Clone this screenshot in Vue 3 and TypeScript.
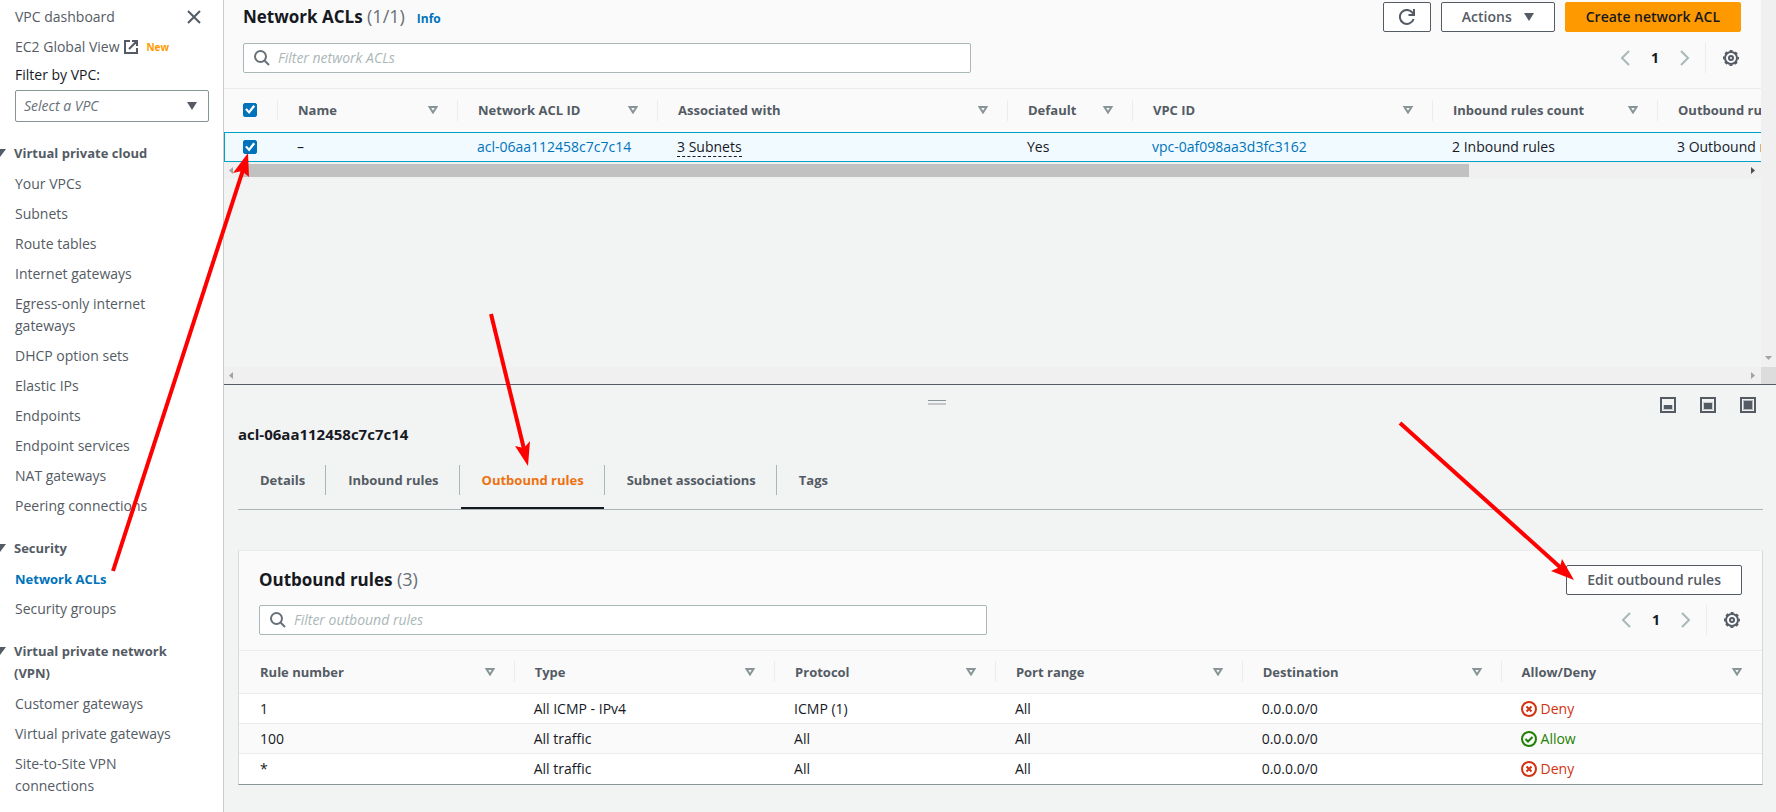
<script setup lang="ts">
import { ref } from 'vue'

interface NavSection {
  title: string
  links: string[]
}

interface Column {
  label: string
  width: string
}

interface Rule {
  number: string
  type: string
  protocol: string
  ports: string
  destination: string
  allow: boolean
}

const sections: NavSection[] = [
  {
    title: 'Virtual private cloud',
    links: [
      'Your VPCs',
      'Subnets',
      'Route tables',
      'Internet gateways',
      'Egress-only internet gateways',
      'DHCP option sets',
      'Elastic IPs',
      'Endpoints',
      'Endpoint services',
      'NAT gateways',
      'Peering connections',
    ],
  },
  { title: 'Security', links: ['Network ACLs', 'Security groups'] },
  {
    title: 'Virtual private network (VPN)',
    links: ['Customer gateways', 'Virtual private gateways', 'Site-to-Site VPN connections'],
  },
]
const activeLink = ref('Network ACLs')

const aclColumns: Column[] = [
  { label: 'Name', width: '180px' },
  { label: 'Network ACL ID', width: '200px' },
  { label: 'Associated with', width: '350px' },
  { label: 'Default', width: '125px' },
  { label: 'VPC ID', width: '300px' },
  { label: 'Inbound rules count', width: '225px' },
  { label: 'Outbound rules count', width: '225px' },
]

const tabs = ['Details', 'Inbound rules', 'Outbound rules', 'Subnet associations', 'Tags']
const activeTab = ref('Outbound rules')

const ruleColumns: Column[] = [
  { label: 'Rule number', width: '18.1%' },
  { label: 'Type', width: '17.1%' },
  { label: 'Protocol', width: '14.5%' },
  { label: 'Port range', width: '16.2%' },
  { label: 'Destination', width: '17%' },
  { label: 'Allow/Deny', width: '17.1%' },
]

const rules: Rule[] = [
  { number: '1', type: 'All ICMP - IPv4', protocol: 'ICMP (1)', ports: 'All', destination: '0.0.0.0/0', allow: false },
  { number: '100', type: 'All traffic', protocol: 'All', ports: 'All', destination: '0.0.0.0/0', allow: true },
  { number: '*', type: 'All traffic', protocol: 'All', ports: 'All', destination: '0.0.0.0/0', allow: false },
]

const allSelected = ref(true)
const rowSelected = ref(true)
const aclFilter = ref('')
const ruleFilter = ref('')
const vpc = ref('')
</script>

<template>
  <div class="page">
    <nav class="sidebar" aria-label="VPC">
      <div class="side-row">
        <a href="#" class="side-link">VPC dashboard</a>
        <button class="icon-btn close" aria-label="Close navigation">
          <svg width="14" height="14" viewBox="0 0 14 14"><path d="M1 1l12 12M13 1L1 13" fill="none" stroke="#545b64" stroke-width="2" /></svg>
        </button>
      </div>
      <div class="side-row ec2">
        <a href="#" class="side-link">EC2 Global View</a>
        <svg width="14" height="14" viewBox="0 0 14 14" fill="none" stroke="#545b64" stroke-width="2">
          <path d="M6 1H1v12h12V8M8 1h5v5M13 1L5 9" />
        </svg>
        <span class="new">New</span>
      </div>
      <label class="filter-label" for="vpc-select">Filter by VPC:</label>
      <div class="select-wrap">
        <select id="vpc-select" v-model="vpc">
          <option value="">Select a VPC</option>
        </select>
        <svg width="10" height="8" viewBox="0 0 10 8"><path d="M0 0h10L5 8z" fill="#545b64" /></svg>
      </div>

      <section v-for="s in sections" :key="s.title" class="nav-section">
        <button class="nav-head">
          <svg width="12" height="8" viewBox="0 0 12 8"><path d="M0 0h12L6 8z" fill="#545b64" /></svg>
          <span>{{ s.title }}</span>
        </button>
        <ul>
          <li v-for="l in s.links" :key="l">
            <a href="#" class="side-link" :class="{ active: l === activeLink }" @click.prevent="activeLink = l">{{ l }}</a>
          </li>
        </ul>
      </section>
    </nav>

    <main class="main">
      <section class="top-pane">
        <div class="top-content">
          <header class="table-header">
            <div class="title-row">
              <h1>Network ACLs <span class="count">(1/1)</span></h1>
              <a href="#" class="info">Info</a>
              <div class="actions">
                <button class="btn refresh" aria-label="Refresh">
                  <svg width="16" height="16" viewBox="0 0 16 16" fill="none" stroke="#545b64" stroke-width="2">
                    <path d="M14.6 10A7 7 0 1 1 13.4 3.6L15 5.4" />
                    <path d="M15 0v6H9.500" />
                  </svg>
                </button>
                <button class="btn">
                  Actions
                  <svg width="10" height="8" viewBox="0 0 10 8"><path d="M0 0h10L5 8z" fill="#545b64" /></svg>
                </button>
                <button class="btn primary">Create network ACL</button>
              </div>
            </div>
            <div class="filter-row">
              <label class="search">
                <svg width="16" height="16" viewBox="0 0 16 16" fill="none" stroke="#687078" stroke-width="2">
                  <circle cx="6.500" cy="6.500" r="5.500" /><path d="M10.500 10.500L15 15" />
                </svg>
                <input v-model="aclFilter" type="text" aria-label="Filter network ACLs" placeholder="Filter network ACLs" />
              </label>
              <div class="pager">
                <button class="icon-btn" aria-label="Previous page">
                  <svg width="10" height="16" viewBox="0 0 10 16"><path d="M9 1L2 8l7 7" fill="none" stroke="#aab7b8" stroke-width="2" /></svg>
                </button>
                <button class="icon-btn page-no">1</button>
                <button class="icon-btn" aria-label="Next page">
                  <svg width="10" height="16" viewBox="0 0 10 16"><path d="M1 1l7 7-7 7" fill="none" stroke="#aab7b8" stroke-width="2" /></svg>
                </button>
                <span class="divider"></span>
                <button class="icon-btn gear" aria-label="Preferences">
                  <svg width="16" height="16" viewBox="0 0 16 16" fill="none" stroke="#545b64">
                    <circle cx="8" cy="8" r="6" stroke-width="2" />
                    <circle cx="8" cy="8" r="7.300" stroke-width="1.400" stroke-dasharray="3 2.730" stroke-dashoffset="1.500" />
                    <circle cx="8" cy="8" r="2" stroke-width="2" />
                  </svg>
                </button>
              </div>
            </div>
          </header>

          <div class="table-clip">
            <table class="acl-table">
              <colgroup>
                <col class="col-check" />
                <col v-for="c in aclColumns" :key="c.label" :style="{ width: c.width }" />
              </colgroup>
              <thead>
                <tr>
                  <th class="check"><input v-model="allSelected" type="checkbox" aria-label="Select all" /></th>
                  <th v-for="c in aclColumns" :key="c.label">
                    <div class="th">
                      <span>{{ c.label }}</span>
                      <svg width="10" height="8" viewBox="0 0 10 8"><path d="M1.500 1h7L5 6.500z" fill="none" stroke="#879596" stroke-width="2" /></svg>
                    </div>
                  </th>
                </tr>
              </thead>
              <tbody>
                <tr class="selected">
                  <td class="check"><input v-model="rowSelected" type="checkbox" aria-label="Select acl-06aa112458c7c7c14" /></td>
                  <td>–</td>
                  <td><a href="#">acl-06aa112458c7c7c14</a></td>
                  <td><span class="dashed">3 Subnets</span></td>
                  <td>Yes</td>
                  <td><a href="#">vpc-0af098aa3d3fc3162</a></td>
                  <td>2 Inbound rules</td>
                  <td>3 Outbound rules</td>
                </tr>
              </tbody>
            </table>
          </div>
          <div class="hbar">
            <svg width="4" height="7" viewBox="0 0 4 7"><path d="M4 0v7L0 3.500z" fill="#a3a3a3" /></svg>
            <div class="track"><div class="thumb"></div></div>
            <svg width="4" height="7" viewBox="0 0 4 7"><path d="M0 0v7L4 3.500z" fill="#505050" /></svg>
          </div>
        </div>
        <div class="vbar">
          <svg width="7" height="4" viewBox="0 0 7 4"><path d="M0 0h7L3.500 4z" fill="#a3a3a3" /></svg>
        </div>
        <div class="hbar outer">
          <svg width="4" height="7" viewBox="0 0 4 7"><path d="M4 0v7L0 3.500z" fill="#a3a3a3" /></svg>
          <svg width="4" height="7" viewBox="0 0 4 7"><path d="M0 0v7L4 3.500z" fill="#a3a3a3" /></svg>
        </div>
        <div class="corner"></div>
      </section>

      <section class="split">
        <div class="split-bar">
          <span></span>
          <svg class="grip" width="18" height="5" viewBox="0 0 18 5">
            <path d="M0 .500h18" stroke="#879596" /><path d="M0 4h18" stroke="#c3c7c7" stroke-width="2" />
          </svg>
          <div class="sizes">
            <button class="icon-btn" aria-label="Small panel">
              <svg width="16" height="16" viewBox="0 0 16 16"><rect x="1" y="1" width="14" height="14" fill="none" stroke="#545b64" stroke-width="2" /><path d="M3 8h10v5H3z" fill="#545b64" opacity=".25" /><path d="M4 8h8v4H4z" fill="#545b64" /></svg>
            </button>
            <button class="icon-btn" aria-label="Medium panel">
              <svg width="16" height="16" viewBox="0 0 16 16"><rect x="1" y="1" width="14" height="14" fill="none" stroke="#545b64" stroke-width="2" /><path d="M3 5h10v8H3z" fill="#545b64" opacity=".25" /><path d="M4 6h8v6H4z" fill="#545b64" /></svg>
            </button>
            <button class="icon-btn" aria-label="Full panel">
              <svg width="16" height="16" viewBox="0 0 16 16"><rect x="1" y="1" width="14" height="14" fill="none" stroke="#545b64" stroke-width="2" /><path d="M3 3h10v10H3z" fill="#545b64" opacity=".4" /><path d="M4 4h8v8H4z" fill="#545b64" /></svg>
            </button>
          </div>
        </div>
        <h2 class="acl-id">acl-06aa112458c7c7c14</h2>
        <div class="tabs" role="tablist">
          <div v-for="t in tabs" :key="t" class="tab-item">
            <button role="tab" :aria-selected="t === activeTab" :class="{ active: t === activeTab }" @click="activeTab = t">{{ t }}</button>
          </div>
        </div>

        <div class="card">
          <header class="table-header">
            <div class="title-row">
              <h1>Outbound rules <span class="count">(3)</span></h1>
              <div class="actions"><button class="btn">Edit outbound rules</button></div>
            </div>
            <div class="filter-row">
              <label class="search">
                <svg width="16" height="16" viewBox="0 0 16 16" fill="none" stroke="#687078" stroke-width="2">
                  <circle cx="6.500" cy="6.500" r="5.500" /><path d="M10.500 10.500L15 15" />
                </svg>
                <input v-model="ruleFilter" type="text" aria-label="Filter outbound rules" placeholder="Filter outbound rules" />
              </label>
              <div class="pager">
                <button class="icon-btn" aria-label="Previous page">
                  <svg width="10" height="16" viewBox="0 0 10 16"><path d="M9 1L2 8l7 7" fill="none" stroke="#aab7b8" stroke-width="2" /></svg>
                </button>
                <button class="icon-btn page-no">1</button>
                <button class="icon-btn" aria-label="Next page">
                  <svg width="10" height="16" viewBox="0 0 10 16"><path d="M1 1l7 7-7 7" fill="none" stroke="#aab7b8" stroke-width="2" /></svg>
                </button>
                <span class="divider"></span>
                <button class="icon-btn gear" aria-label="Preferences">
                  <svg width="16" height="16" viewBox="0 0 16 16" fill="none" stroke="#545b64">
                    <circle cx="8" cy="8" r="6" stroke-width="2" />
                    <circle cx="8" cy="8" r="7.300" stroke-width="1.400" stroke-dasharray="3 2.730" stroke-dashoffset="1.500" />
                    <circle cx="8" cy="8" r="2" stroke-width="2" />
                  </svg>
                </button>
              </div>
            </div>
          </header>
          <table class="rule-table">
            <colgroup>
              <col v-for="c in ruleColumns" :key="c.label" :style="{ width: c.width }" />
            </colgroup>
            <thead>
              <tr>
                <th v-for="c in ruleColumns" :key="c.label">
                  <div class="th">
                    <span>{{ c.label }}</span>
                    <svg width="10" height="8" viewBox="0 0 10 8"><path d="M1.500 1h7L5 6.500z" fill="none" stroke="#879596" stroke-width="2" /></svg>
                  </div>
                </th>
              </tr>
            </thead>
            <tbody>
              <tr v-for="r in rules" :key="r.number">
                <td>{{ r.number }}</td>
                <td>{{ r.type }}</td>
                <td>{{ r.protocol }}</td>
                <td>{{ r.ports }}</td>
                <td>{{ r.destination }}</td>
                <td>
                  <span class="status" :class="r.allow ? 'allow' : 'deny'">
                    <svg width="16" height="16" viewBox="0 0 16 16" fill="none" stroke="currentColor" stroke-width="2">
                      <circle cx="8" cy="8" r="7" />
                      <path v-if="r.allow" d="M4.500 8L7 10.500 11.500 6" />
                      <path v-else d="M5.500 5.500l5 5M10.500 5.500l-5 5" />
                    </svg>
                    {{ r.allow ? 'Allow' : 'Deny' }}
                  </span>
                </td>
              </tr>
            </tbody>
          </table>
        </div>
      </section>
    </main>

    <svg class="arrows" width="1776" height="812" viewBox="0 0 1776 812" aria-hidden="true">
      <g stroke="#f00" stroke-width="4">
        <path d="M113 571L243 170" />
        <path d="M491 314L524 449" />
        <path d="M1400 423L1561 568" />
      </g>
      <g fill="#f00">
        <path d="M248 153L233 173L242 171L249 177z" />
        <path d="M528 466L515 446L524 448L530 441z" />
        <path d="M1574 580L1551 571L1560 567L1562 559z" />
      </g>
    </svg>
  </div>
</template>

<style>
body {
  margin: 0;
}
</style>

<style scoped>
.page {
  position: relative;
  display: flex;
  min-height: 100vh;
  overflow: hidden;
  background: #f2f3f3;
  color: #16191f;
  font-family: "Open Sans", "Noto Sans", sans-serif;
  font-size: 14px;
  line-height: 22px;
}
* {
  box-sizing: border-box;
}
button,
input,
select {
  font: inherit;
  color: inherit;
}
button {
  cursor: pointer;
}
svg {
  display: block;
  flex: none;
}
a {
  color: #0073bb;
  text-decoration: none;
}
.icon-btn {
  display: flex;
  padding: 0;
  border: 0;
  background: none;
}

/* Side navigation */
.sidebar {
  flex: 0 0 224px;
  padding: 6px 14px 14px 15px;
  border-right: 1px solid #ccc;
  background: #fff;
}
.side-row {
  display: flex;
  align-items: center;
  justify-content: space-between;
}
.side-row .close {
  margin-right: 8px;
}
.side-row.ec2 {
  justify-content: flex-start;
  gap: 5px;
  margin: 8px 0 6px;
}
.new {
  margin-left: 3px;
  color: #ff9900;
  font-size: 10px;
  font-weight: 700;
}
.side-link {
  color: #545b64;
}
.side-link.active {
  color: #0073bb;
  font-size: 13px;
  font-weight: 700;
}
.filter-label {
  display: block;
  margin-bottom: 4px;
}
.select-wrap {
  display: grid;
  align-items: center;
}
.select-wrap > * {
  grid-area: 1 / 1;
}
.select-wrap svg {
  justify-self: end;
  margin-right: 12px;
  pointer-events: none;
}
select {
  width: 100%;
  height: 32px;
  padding: 0 8px;
  border: 1px solid #879596;
  border-radius: 2px;
  background: #fff;
  color: #687078;
  font-style: italic;
  appearance: none;
}
.nav-section {
  margin-top: 20px;
}
.nav-head {
  display: flex;
  align-items: flex-start;
  gap: 8px;
  margin: 0 0 9px -21px;
  padding: 0;
  border: 0;
  background: none;
  color: #545b64;
  font-size: 13px;
  font-weight: 700;
  text-align: left;
}
.nav-head svg {
  margin-top: 7px;
}
.nav-head span {
  max-width: 180px;
}
ul {
  display: flex;
  flex-direction: column;
  gap: 8px;
  margin: 0;
  padding: 0 20px 0 0;
  list-style: none;
}

/* Upper pane */
.main {
  display: flex;
  flex: 1;
  flex-direction: column;
  min-width: 0;
}
.top-pane {
  display: grid;
  flex: 0 0 384px;
  grid-template: minmax(0, 1fr) 17px / minmax(0, 1fr) 15px;
}
.top-content {
  min-width: 0;
}
.table-header {
  padding: 0 20px 15px 19px;
  border-bottom: 1px solid #eaeded;
  background: #fafafa;
}
.top-content .table-header {
  padding-top: 2px;
}
.title-row {
  display: flex;
  align-items: center;
}
h1 {
  margin: 0;
  padding-bottom: 2px;
  font-size: 17px;
  font-weight: 700;
  line-height: 22px;
}
.count {
  color: #687078;
  font-size: 18px;
  font-weight: 400;
}
.info {
  margin: 3px 0 0 12px;
  font-size: 12px;
  font-weight: 700;
}
.actions {
  display: flex;
  gap: 10px;
  margin-left: auto;
}
.btn {
  display: flex;
  align-items: center;
  justify-content: center;
  gap: 12px;
  height: 30px;
  padding: 0 20px;
  border: 1px solid #545b64;
  border-radius: 2px;
  background: #fff;
  color: #545b64;
  font-weight: 600;
}
.btn.refresh {
  width: 48px;
  padding: 0;
}
.btn.primary {
  border-color: #ff9900;
  background: #ff9900;
  color: #16191f;
}
.filter-row {
  display: flex;
  align-items: center;
  justify-content: space-between;
  margin-top: 11px;
}
.search {
  display: flex;
  flex: 0 1 728px;
  align-items: center;
  gap: 8px;
  height: 30px;
  padding: 0 10px;
  border: 1px solid #aab7b8;
  border-radius: 2px;
  background: #fff;
}
.search input {
  flex: 1;
  min-width: 0;
  padding: 0;
  border: 0;
  outline: 0;
  background: none;
}
.search input::placeholder {
  color: #aab7b8;
  font-style: italic;
}
.pager {
  display: flex;
  align-items: center;
}
.page-no {
  justify-content: center;
  width: 50px;
  font-weight: 700;
}
.divider {
  width: 1px;
  height: 30px;
  margin-left: 15px;
  background: #eaeded;
}
.gear {
  margin: 0 2px 0 17px;
}

/* Tables */
.table-clip {
  overflow: hidden;
}
table {
  border-collapse: separate;
  border-spacing: 0;
  table-layout: fixed;
}
.acl-table {
  width: 1659px;
  min-width: 100%;
}
.col-check {
  width: 54px;
}
th {
  height: 43px;
  padding: 0 0 1px;
  background: #fafafa;
  color: #545b64;
  font-size: 13px;
  font-weight: 700;
  text-align: left;
}
.th {
  display: flex;
  align-items: center;
  justify-content: space-between;
  height: 21px;
  padding: 0 19px 0 20px;
  border-right: 1px solid #eaeded;
  white-space: nowrap;
}
th.check::after {
  display: block;
  width: 1px;
  height: 21px;
  margin-left: auto;
  background: #eaeded;
  content: "";
}
th.check {
  padding-left: 19px;
}
th.check input {
  float: left;
}
th:last-child .th {
  border-right-color: transparent;
}
td {
  height: 30px;
  padding: 0 19px;
  background: #fff;
  white-space: nowrap;
}
td.check {
  padding: 0 0 0 19px;
}
.selected td {
  border: solid #00a1c9;
  border-width: 1px 0;
  background: #f1faff;
}
.selected td:first-child {
  border-left-width: 1px;
  padding-left: 18px;
}
input[type='checkbox'] {
  display: block;
  width: 14px;
  height: 14px;
  margin: 0;
  border: 1px solid #0073bb;
  border-radius: 2px;
  background: #fff;
  appearance: none;
}
th.check input[type='checkbox'] {
  margin-top: 3px;
}
input[type='checkbox']:checked {
  background: #0073bb;
}
input[type='checkbox']:checked::before {
  display: block;
  width: 12px;
  height: 12px;
  background: #fff;
  clip-path: polygon(9% 50%, 24% 39%, 41% 60%, 77% 12%, 93% 24%, 43% 87%);
  content: "";
}
.dashed {
  display: inline-block;
  border-bottom: 1px dashed #16191f;
  line-height: 18px;
}

/* Scroll bars */
.hbar {
  display: flex;
  align-items: center;
  gap: 7px;
  height: 17px;
  padding: 0 6px 0 5px;
  background: #f0f0f0;
}
.outer {
  justify-content: space-between;
}
.track {
  flex: 1;
}
.thumb {
  width: 81.7%;
  height: 13px;
  background: #c1c1c1;
}
.vbar {
  display: flex;
  align-items: flex-end;
  justify-content: center;
  padding-bottom: 7px;
  background: #f0f0f0;
}
.corner {
  background: #dcdcdc;
}

/* Split panel */
.split {
  flex: 1;
  padding: 0 13px 26px 14px;
  border-top: 1px solid #545b64;
}
.split-bar {
  display: grid;
  grid-template-columns: 46fr auto 54fr;
  padding: 12px 7px 0 0;
}
.grip {
  margin: 3px 0 0;
}
.sizes {
  display: flex;
  justify-content: flex-end;
  gap: 24px;
}
.acl-id {
  margin: 10px 0 0;
  font-size: 15px;
  font-weight: 700;
  line-height: 22px;
}
.tabs {
  display: flex;
  margin-top: 20px;
  border-bottom: 1px solid #aab7b8;
}
.tab-item {
  display: flex;
  align-items: flex-start;
}
.tab-item:not(:last-child)::after {
  width: 1px;
  height: 30px;
  background: #aab7b8;
  content: "";
}
.tabs button {
  height: 44px;
  margin: 0 0 0 1px;
  padding: 0 20px 12px 21px;
  border: 0;
  border-bottom: 2px solid transparent;
  background: none;
  color: #545b64;
  font-size: 13px;
  font-weight: 700;
}
.tabs button.active {
  border-bottom-color: #16191f;
  color: #ec7211;
}
.card {
  margin-top: 40px;
  border: solid #d5dbdb;
  border-top-color: #eaeded;
  border-width: 1px;
  border-bottom-color: #879596;
}
.card .table-header {
  padding: 14px 20px 15px;
}
.card .filter-row {
  margin-top: 10px;
}
.rule-table {
  width: 100%;
}
.rule-table th {
  border-bottom: 1px solid #eaeded;
}
.rule-table tbody tr:nth-child(even) td {
  background: #fafafa;
}
.rule-table tbody tr:not(:last-child) td {
  border-bottom: 1px solid #eaeded;
}
.rule-table th:first-child .th,
.rule-table td:first-child {
  padding-left: 21px;
}
.status {
  display: flex;
  align-items: center;
  gap: 4px;
}
.deny {
  color: #d13212;
}
.allow {
  color: #1d8102;
}

/* Annotation arrows lie over the whole console */
.arrows {
  position: absolute;
  top: 0;
  left: 0;
  pointer-events: none;
}
</style>
